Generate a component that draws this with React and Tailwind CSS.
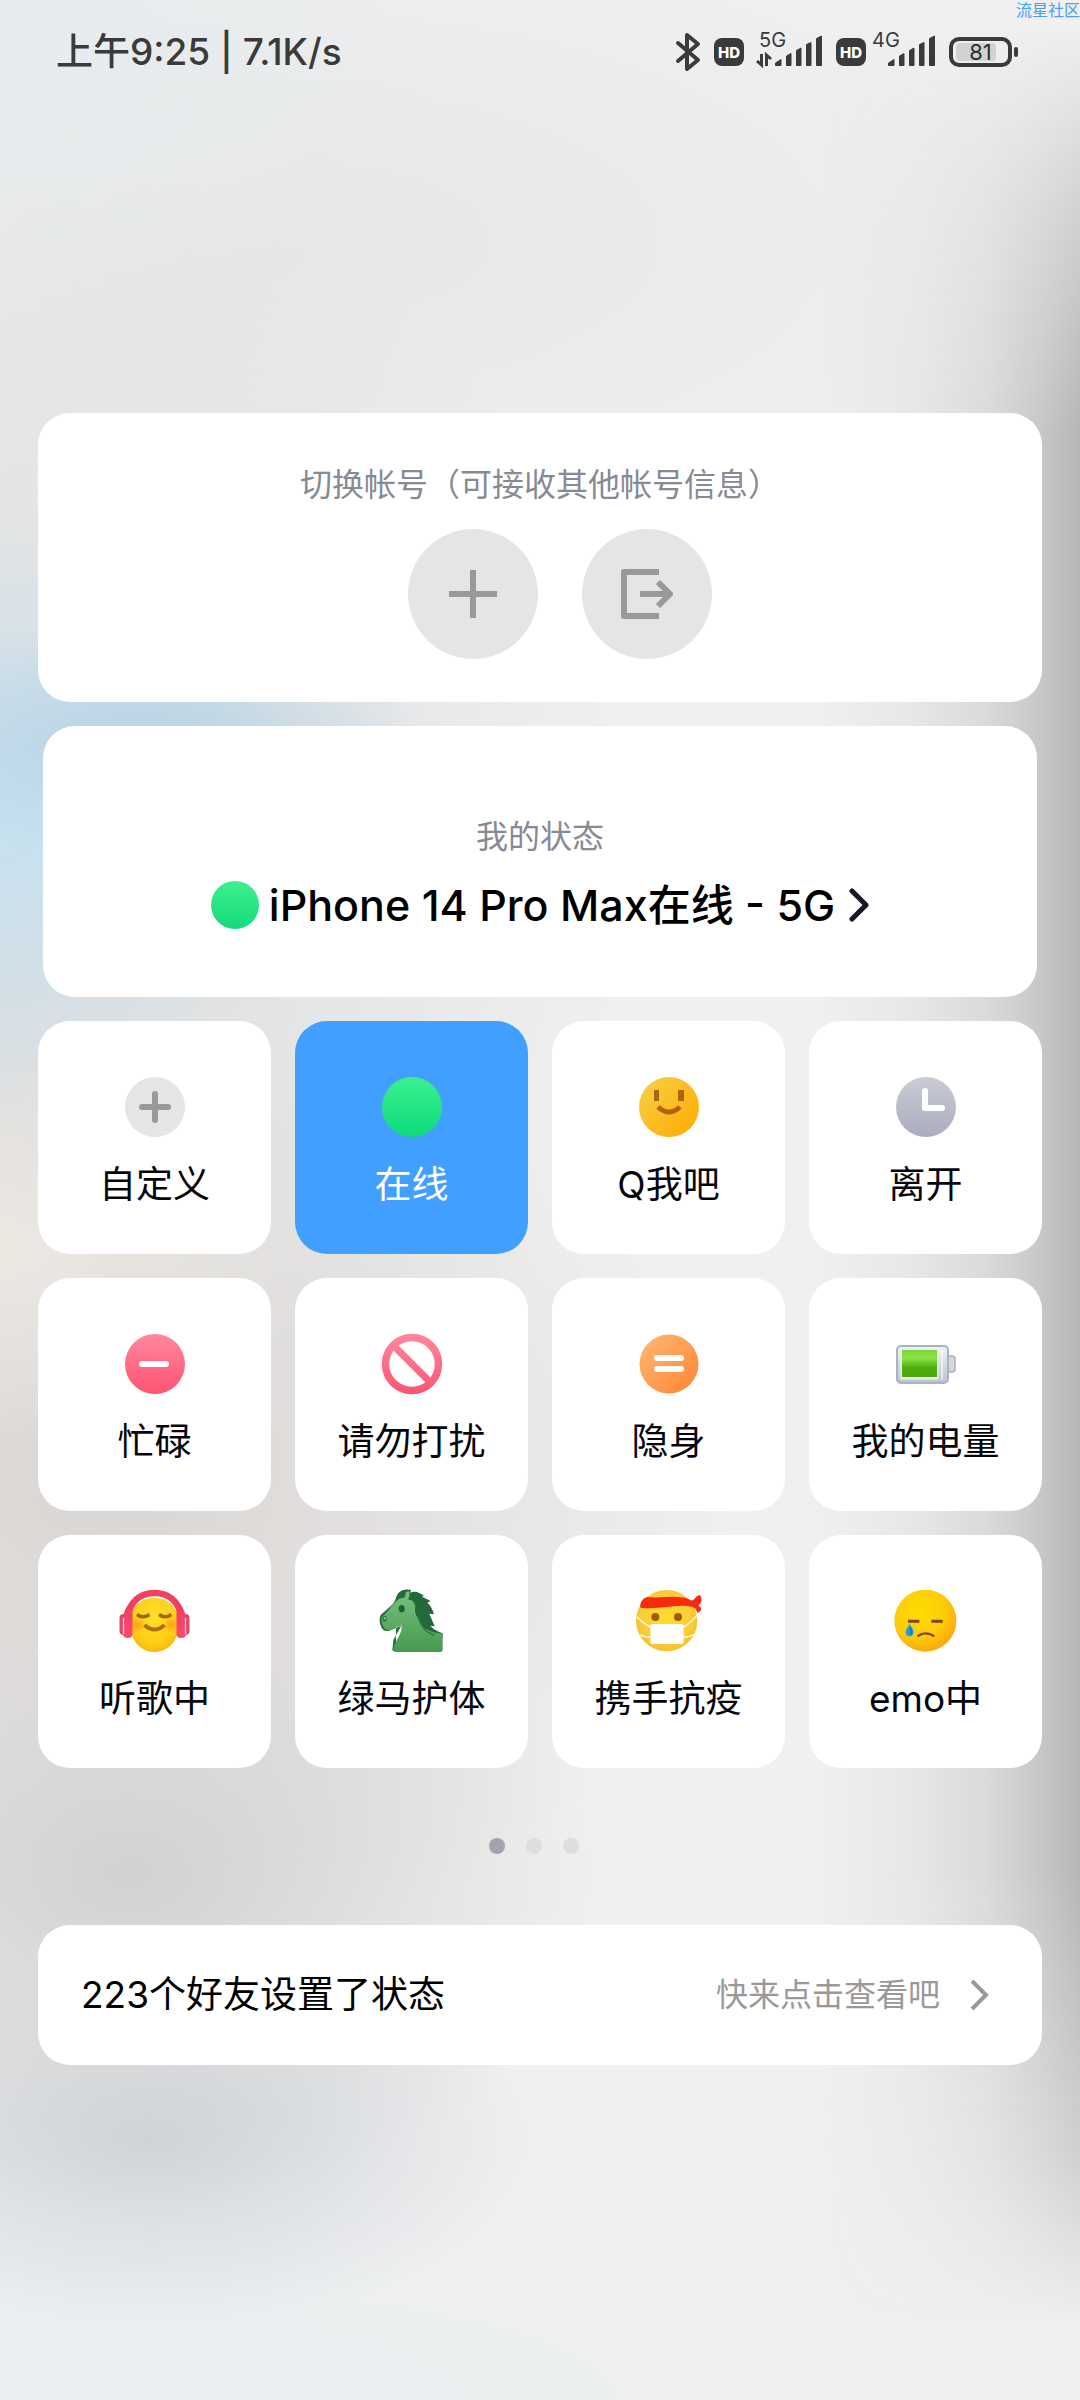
import React from 'react'

const TEXT_FONT = "font-['Inter','Noto_Sans_CJK_SC',sans-serif]"

/* ---------- status bar ---------- */

function Bluetooth() {
  return (
    <svg width="26" height="40" viewBox="0 0 26 40" fill="none" stroke="#3a3a3a" strokeWidth="4" strokeLinecap="round" strokeLinejoin="round" aria-label="蓝牙">
      <path d="M3 11 L23 28 L12 37 V3 L23 12 L3 29" />
    </svg>
  )
}

function HdBadge() {
  return (
    <span className="flex h-7 w-[30px] items-center justify-center rounded-lg bg-[#3a3a3a] text-[15px] leading-none font-extrabold text-white">HD</span>
  )
}

function Bars() {
  return (
    <g fill="#3a3a3a" stroke="#3a3a3a" strokeWidth="1" strokeLinejoin="round">
      <path d="M0.500 33.500 V31 L6 27.500 V33.500 Z" />
      <path d="M11.500 33.500 V24 L16 21.500 V33.500 Z" />
      <path d="M21.500 33.500 V18.500 L26 16 V33.500 Z" />
      <path d="M31.500 33.500 V12.500 L36 10.500 V33.500 Z" />
      <path d="M41.500 33.500 V6.500 L46.500 4 V33.500 Z" />
    </g>
  )
}

function Signal({ type, active }) {
  return (
    <svg width={active ? 73 : 64} height="56" viewBox={active ? '0 -8 73 56' : '0 -8 64 56'} aria-label={type}>
      <text x={active ? 9 : 0} y="15" fontSize="20" fill="#3a3a3a">{type}</text>
      {active && (
        <path d="M11.500 22 V33 L7 29 M16.500 34 V23 L21 27" fill="none" stroke="#3a3a3a" strokeWidth="3" />
      )}
      <g transform={active ? 'translate(25 0)' : 'translate(16 0)'}>
        <Bars />
      </g>
    </svg>
  )
}

function Battery() {
  return (
    <span className="flex items-center gap-[2px]">
      <span className="relative flex h-[30px] w-[63px] items-center justify-center rounded-[10px] border-4 border-[#3a3a3a] p-[2px]">
        <span className="absolute inset-y-[2px] left-[3px] w-10 rounded-sm bg-[#d2d2d2]" />
        <span className="relative text-[22px] leading-none text-[#2f2f2f]">81</span>
      </span>
      <span className="h-[10px] w-1 rounded-sm bg-[#3a3a3a]" />
    </span>
  )
}

function StatusBar() {
  return (
    <header className="flex h-[104px] items-center justify-between pr-[62px] pl-14 text-[#3a3a3a]">
      <span className="text-[37px] leading-[48px] font-medium">上午9:25 | 7.1K/s</span>
      <div className="flex items-center gap-[13px]">
        <Bluetooth />
        <div className="flex items-center gap-[6px]">
          <HdBadge />
          <Signal type="5G" active />
        </div>
        <div className="flex items-center gap-[6px]">
          <HdBadge />
          <Signal type="4G" />
        </div>
        <Battery />
      </div>
    </header>
  )
}

/* ---------- status icons ---------- */

function Gradient({ id, from, to, diagonal }) {
  return (
    <linearGradient id={id} x1="0" y1="0" x2={diagonal ? '1' : '0'} y2="1">
      <stop offset="0" stopColor={from} />
      <stop offset="1" stopColor={to} />
    </linearGradient>
  )
}

function Icon({ children, box = 72 }) {
  return (
    <svg className="size-[72px]" viewBox={`0 0 ${box} ${box}`} fill="none" aria-hidden="true">
      {children}
    </svg>
  )
}

const CustomIcon = () => (
  <Icon>
    <circle cx="36" cy="36" r="30" fill="#e5e5e5" />
    <path d="M36 23 V49 M23 36 H49" stroke="#999" strokeWidth="6" strokeLinecap="round" />
  </Icon>
)

const OnlineIcon = () => (
  <Icon>
    <Gradient id="online" from="#3bf08e" to="#0edb7c" />
    <circle cx="36" cy="36" r="30" fill="url(#online)" />
  </Icon>
)

const SmileIcon = () => (
  <Icon>
    <Gradient id="smile" from="#f9d248" to="#fda900" diagonal />
    <circle cx="36" cy="36" r="30" fill="url(#smile)" />
    <path d="M21 19 h5 v11 h-5 z M45 19 h6 v11 h-6 z" fill="#b0640f" />
    <path d="M25 36 Q36 46 47 36" stroke="#b0640f" strokeWidth="5" />
  </Icon>
)

const AwayIcon = () => (
  <Icon>
    <Gradient id="away" from="#c9cbd6" to="#abadbd" />
    <circle cx="36" cy="36" r="30" fill="url(#away)" />
    <path d="M35 20 V37 H52" stroke="#fff" strokeWidth="6" strokeLinecap="round" strokeLinejoin="round" />
  </Icon>
)

const BusyIcon = () => (
  <Icon>
    <Gradient id="busy" from="#ff879d" to="#ff5373" />
    <circle cx="36" cy="36" r="30" fill="url(#busy)" />
    <path d="M23 36 H47" stroke="#fff" strokeWidth="6" strokeLinecap="round" />
  </Icon>
)

const DndIcon = () => (
  <Icon>
    <defs>
      <linearGradient id="dnd" x1="0" y1="6" x2="0" y2="66" gradientUnits="userSpaceOnUse">
        <stop offset="0" stopColor="#ff879d" />
        <stop offset="1" stopColor="#fa5573" />
      </linearGradient>
    </defs>
    <circle cx="36" cy="36" r="26.500" stroke="url(#dnd)" strokeWidth="7.500" />
    <path d="M18 18 L53 53" stroke="url(#dnd)" strokeWidth="7" />
  </Icon>
)

const HiddenIcon = () => (
  <Icon>
    <Gradient id="hidden" from="#ffb875" to="#ff8530" diagonal />
    <circle cx="36" cy="36" r="29.500" fill="url(#hidden)" />
    <path d="M24 30 H48 M24 41 H48" stroke="#fff" strokeWidth="6" strokeLinecap="round" />
  </Icon>
)

const PowerIcon = () => (
  <Icon>
    <Gradient id="shell" from="#f2f5f8" to="#b9c3cd" />
    <defs>
      <linearGradient id="charge" x1="0" y1="0" x2="0" y2="1">
        <stop offset="0" stopColor="#7bd535" />
        <stop offset="0.300" stopColor="#8ce348" />
        <stop offset="0.650" stopColor="#4fae0f" />
        <stop offset="1" stopColor="#4aa60c" />
      </linearGradient>
    </defs>
    <rect x="56" y="28" width="9" height="16" rx="3" fill="#d3d8dc" stroke="#aab2ba" strokeWidth="1.500" />
    <rect x="7" y="18" width="51" height="37" rx="4" fill="url(#shell)" stroke="#a9b3c1" strokeWidth="2" />
    <rect x="10.500" y="21.500" width="38" height="30" rx="1" fill="#e9f0ea" />
    <rect x="12" y="22" width="35" height="27" fill="url(#charge)" />
    <path d="M52 21 V52" stroke="#fff" strokeWidth="1.500" opacity="0.700" />
  </Icon>
)

const MusicIcon = () => (
  <Icon>
    <defs>
      <radialGradient id="music" cx="0.500" cy="0.350" r="0.700">
        <stop offset="0" stopColor="#ffe02e" />
        <stop offset="0.700" stopColor="#fdcd14" />
        <stop offset="1" stopColor="#f9b10c" />
      </radialGradient>
      <radialGradient id="blush">
        <stop offset="0" stopColor="#ff8a1f" stopOpacity="0.700" />
        <stop offset="1" stopColor="#ff8a1f" stopOpacity="0" />
      </radialGradient>
      <Gradient id="cup" from="#ef3a5f" to="#fb4a70" />
    </defs>
    <rect x="0.500" y="29" width="8" height="21" rx="4" fill="#dd4a68" />
    <rect x="62.500" y="29" width="8" height="21" rx="4" fill="#dd4a68" />
    <path d="M12 28 C17 17 26 13 35 13 C45 13 53 17 58 28 V50 C55 60 46 67 35 67 C25 67 16 60 13 50 Z" fill="url(#music)" />
    <circle cx="19" cy="40" r="8" fill="url(#blush)" />
    <circle cx="52" cy="40" r="8" fill="url(#blush)" />
    <path d="M8 34 C11 15 22 8 35.500 8 C49 8 60 15 63 34" stroke="#f2405f" strokeWidth="6.500" />
    <path d="M4 33 C5 24 10 17 15 15 L13.500 26 V49 Q13.500 53 9 53 Q4 53 4 49 Z" fill="url(#cup)" />
    <path d="M67 33 C66 24 61 17 56 15 L57.500 26 V49 Q57.500 53 62 53 Q67 53 67 49 Z" fill="url(#cup)" />
    <path d="M4.500 33 V49 M66.500 33 V49" stroke="#ffc3ce" strokeWidth="1.300" />
    <path d="M18 29.500 Q24 34 30.500 29.500 M40 29.500 Q46 34 52.500 29.500" stroke="#a1680a" strokeWidth="3.500" />
    <path d="M25.500 40 Q35.500 49 45.500 40" stroke="#ae700c" strokeWidth="4" />
  </Icon>
)

const HorseIcon = () => (
  <Icon box={216}>
    <Gradient id="horse" from="#79bf80" to="#459a4d" />
    <path d="M58 48 C62 24 74 12 98 14 L105 14 L102 23 C118 16 130 22 144 32 L138 35 L164 48 L154 53 C164 60 170 74 174 88 L160 86 L176 124 L163 122 C174 134 186 140 200 145 V160 L130 140 L112 60 Z" fill="#24693a" />
    <path d="M60 42 L50 58 L14 90 C6 104 14 132 26 137 L38 138 L76 122 L52 165 L49 196 L60 201 Z" fill="#2b6d3d" />
    <path d="M90 22 L98 18 C104 30 100 38 94 43 C108 44 116 52 118 66 C114 78 116 88 124 96 C132 114 132 138 200 146 V194 Q200 201 193 201 H60 Q52 201 53 193 C56 165 82 144 76 121 C64 126 54 129 48 134 C32 142 14 126 17 96 C34 84 44 62 66 44 C74 38 84 42 87 34 Z" fill="url(#horse)" />
    <ellipse cx="77" cy="71" rx="9" ry="11" fill="#246037" />
    <ellipse cx="26" cy="101" rx="7" ry="9" fill="#2f7c43" />
    <circle cx="27" cy="100" r="3" fill="#a9dbaa" />
    <path d="M130 96 C132 124 150 144 176 150" stroke="#2f7c43" strokeWidth="4" />
  </Icon>
)

const MaskIcon = () => (
  <Icon box={216}>
    <defs>
      <radialGradient id="mask" cx="0.500" cy="0.450" r="0.550">
        <stop offset="0" stopColor="#ffdd2e" />
        <stop offset="0.750" stopColor="#fbcb38" />
        <stop offset="1" stopColor="#f5c02c" />
      </radialGradient>
    </defs>
    <circle cx="101" cy="107" r="92" fill="url(#mask)" />
    <path d="M22 68 C20 54 28 40 42 36 C88 42 138 26 174 46 C184 48 186 34 200 30 C208 38 208 54 196 62 C208 68 208 76 194 84 C190 76 188 70 180 66 C128 54 82 76 22 68 Z" fill="#f72c0e" />
    <path d="M11 95 C20 104 36 120 56 128 M194 90 C182 102 168 118 148 128 M22 150 Q38 158 56 156 M148 156 Q166 158 186 148" stroke="#fff6d2" strokeWidth="5" />
    <circle cx="67" cy="96" r="12" fill="#a25c08" />
    <circle cx="135" cy="96" r="12" fill="#a25c08" />
    <rect x="52" y="117" width="100" height="60" rx="5" fill="#fffefb" />
  </Icon>
)

const EmoIcon = () => (
  <Icon box={216}>
    <defs>
      <radialGradient id="emo" cx="0.400" cy="0.350" r="0.700">
        <stop offset="0" stopColor="#ffdc00" />
        <stop offset="0.600" stopColor="#fdcb08" />
        <stop offset="1" stopColor="#fba50e" />
      </radialGradient>
    </defs>
    <circle cx="106" cy="107" r="93" fill="url(#emo)" />
    <path d="M54 109 H88 M124 109 H158" stroke="#7d4413" strokeWidth="9" />
    <path d="M82 154 Q107 136 133 154" stroke="#8a470d" strokeWidth="7" />
    <path d="M59 116 C66 128 71 134 71 142 A12 12 0 0 1 47 142 C47 134 52 128 59 116 Z" fill="#249fdc" />
    <path d="M60 128 C65 136 66 142 61 148" stroke="#0f74b8" strokeWidth="5" />
  </Icon>
)

const STATUSES = [
  { label: '自定义', icon: CustomIcon },
  { label: '在线', icon: OnlineIcon, active: true },
  { label: 'Q我吧', icon: SmileIcon },
  { label: '离开', icon: AwayIcon },
  { label: '忙碌', icon: BusyIcon },
  { label: '请勿打扰', icon: DndIcon },
  { label: '隐身', icon: HiddenIcon },
  { label: '我的电量', icon: PowerIcon },
  { label: '听歌中', icon: MusicIcon },
  { label: '绿马护体', icon: HorseIcon },
  { label: '携手抗疫', icon: MaskIcon },
  { label: 'emo中', icon: EmoIcon },
]

function StatusTile({ label, icon: Glyph, active }) {
  return (
    <button
      type="button"
      aria-pressed={!!active}
      className={
        active
          ? 'flex aspect-square flex-col items-center justify-start rounded-[32px] bg-[#409fff] pt-[50px] text-white'
          : 'flex aspect-square flex-col items-center justify-start rounded-[32px] bg-white pt-[50px] text-[#05060c]'
      }
    >
      <Glyph />
      <span className="mt-[18px] text-[37px] leading-[48px]">{label}</span>
    </button>
  )
}

function Backdrop() {
  return (
    <div className="pointer-events-none absolute inset-0 overflow-hidden" aria-hidden="true">
      {/* soft colour patches along the left edge */}
      <div className="absolute inset-0 bg-[radial-gradient(40%_9%_at_0%_2%,#e5ebee,#e5ebee00),radial-gradient(26%_5%_at_14%_31%,#b6d3e6,#b6d3e600),radial-gradient(28%_12%_at_0%_34%,#c6e2f2,#c6e2f200),radial-gradient(30%_8%_at_0%_52%,#ece8e2,#ece8e200),radial-gradient(58%_20%_at_10%_62%,#d9d5d3,#d9d5d300),radial-gradient(44%_14%_at_12%_78%,#d1d1cf,#d1d1cf00),radial-gradient(36%_8%_at_14%_89%,#cfd4db,#cfd4db00),radial-gradient(100%_9%_at_0%_100%,#e9eef1,#e9eef100),radial-gradient(60%_30%_at_0%_36%,#d8dadb,#d8dadb00),radial-gradient(70%_14%_at_30%_10%,#e6e7e7,#e6e7e700)]" />
      {/* shadow down the right edge */}
      <div className="absolute inset-y-0 right-0 w-[24%] bg-[linear-gradient(to_left,#b6b6b6,#c8c8c8_16%,#dadada_36%,#e6e6e6_62%,#f0f0f000)] [mask-image:linear-gradient(to_bottom,transparent_1%,#0008_9%,black_18%,black_78%,#0008_90%,transparent_97%)]" />
    </div>
  )
}

function App() {
  return (
    <div className={`relative min-h-screen overflow-hidden bg-[#f0f0f0] ${TEXT_FONT}`}>
      <Backdrop />
      <span className="absolute top-0 right-0 text-[16px] leading-5 whitespace-nowrap text-[#4a9df0]">流星社区</span>

      <div className="relative">
        <StatusBar />

        <main className="flex flex-col px-[38px] pt-[309px] pb-16">
          <section className="flex flex-col items-center rounded-[32px] bg-white pt-12 pb-[43px]">
            <h2 className="text-[32px] leading-[48px] text-[#868a94]">切换帐号（可接收其他帐号信息）</h2>
            <div className="mt-5 flex gap-11 pl-10">
              <button type="button" aria-label="添加帐号" className="flex size-[130px] items-center justify-center rounded-full bg-[#e5e5e5]">
                <svg width="48" height="48" viewBox="0 0 48 48" stroke="#999" strokeWidth="6">
                  <path d="M24 0 V48 M0 24 H48" />
                </svg>
              </button>
              <button type="button" aria-label="退出登录" className="flex size-[130px] items-center justify-center rounded-full bg-[#e5e5e5]">
                <svg width="52" height="50" viewBox="0 0 52 50" fill="none" stroke="#999" strokeWidth="6" strokeLinejoin="round">
                  <path d="M38 3 H3 V47 H38" />
                  <path d="M19 25 H48 M37 13 L49 25 L37 37" />
                </svg>
              </button>
            </div>
          </section>

          <section className="mx-[5px] mt-6 flex flex-col items-center rounded-[32px] bg-white pt-[87px] pb-[62px]">
            <h2 className="text-[32px] leading-[48px] text-[#868a94]">我的状态</h2>
            <button type="button" className="mt-[14px] flex h-[60px] items-center gap-[10px] text-black">
              <span className="size-12 rounded-full bg-linear-to-b from-[#3bf08e] to-[#0edb7c]" />
              <span className="text-[43px] leading-[60px] font-medium">iPhone 14 Pro Max在线 - 5G</span>
              <svg className="ml-1" width="20" height="34" viewBox="0 0 20 34" fill="none" stroke="#14162a" strokeWidth="5" strokeLinecap="round" strokeLinejoin="round" aria-hidden="true">
                <path d="M3 3 L17 17 L3 31" />
              </svg>
            </button>
          </section>

          <div className="mt-6 grid grid-cols-4 gap-6">
            {STATUSES.map((s) => (
              <StatusTile key={s.label} {...s} />
            ))}
          </div>

          <div className="mt-[70px] flex justify-center gap-[21px] pr-3">
            <button type="button" aria-label="第1页" className="size-4 rounded-full bg-[#a3a3aa]" />
            <button type="button" aria-label="第2页" className="size-4 rounded-full bg-[#dedede]" />
            <button type="button" aria-label="第3页" className="size-4 rounded-full bg-[#dedede]" />
          </div>

          <a href="#friends" className="mt-[71px] flex h-[140px] items-center rounded-[32px] bg-white pr-[52px] pl-[43px]">
            <span className="text-[37px] leading-[48px] text-black">223个好友设置了状态</span>
            <span className="ml-auto text-[32px] leading-[48px] text-[#999]">快来点击查看吧</span>
            <svg className="ml-7" width="22" height="32" viewBox="0 0 22 32" fill="none" stroke="#999" strokeWidth="4" aria-hidden="true">
              <path d="M4 2 L18 16 L4 30" />
            </svg>
          </a>
        </main>
      </div>
    </div>
  )
}

export default App
